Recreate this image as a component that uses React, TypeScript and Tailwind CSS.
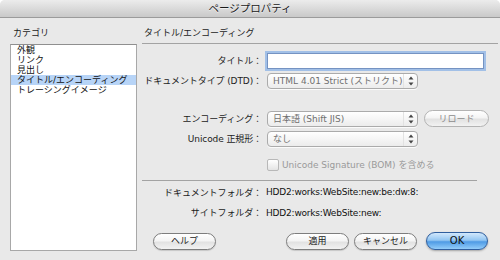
import React from "react";

const font = "font-['DejaVu_Sans','Noto_Sans_CJK_JP',sans-serif]";

// Small up/down stepper arrows of the popup menu.
function Stepper() {
  return (
    <div className="flex h-full w-[14px] items-center justify-center border-l border-[#e2e2e2]">
      <svg width="6" height="10" viewBox="0 0 6 10">
        <path d="M3 0.5 L5.5 3.5 L0.5 3.5 Z" fill="#444" />
        <path d="M3 9.5 L5.5 6.5 L0.5 6.5 Z" fill="#444" />
      </svg>
    </div>
  );
}

function Select({ value }: { value: string }) {
  return (
    <div className="flex h-[16px] w-[151px] items-center rounded-[4px] border border-[#ababab] bg-gradient-to-b from-white to-[#ececec] shadow-[0_1px_0_rgba(255,255,255,0.8)]">
      <span className="flex-1 truncate pl-[5px] leading-[14px] text-[#6f6f6f]">
        {value}
      </span>
      <Stepper />
    </div>
  );
}

function Pill({
  label,
  className = "",
  disabled = false,
}: {
  label: string;
  className?: string;
  disabled?: boolean;
}) {
  return (
    <div
      className={`flex h-[17px] items-center justify-center rounded-full border bg-[linear-gradient(to_bottom,#ffffff_0%,#f4f4f4_45%,#e2e2e2_55%,#f2f2f2_100%)] leading-[14px] ${
        disabled
          ? "border-[#b3b3b3] text-[#8c8c8c]"
          : "border-[#7d7d7d] text-[#1c1c1c] shadow-[0_1px_1px_rgba(0,0,0,0.15)]"
      } ${className}`}
    >
      {label}
    </div>
  );
}

function Row({
  label,
  children,
  className = "",
}: {
  label: string;
  children: React.ReactNode;
  className?: string;
}) {
  return (
    <div className={`flex items-center ${className}`}>
      <span className="w-[120px] text-right leading-[12px] tracking-[-0.1px] text-[#1c1c1c]">
        {label}
      </span>
      <div className="ml-[5px]">{children}</div>
    </div>
  );
}

export default function App() {
  const items = ["外観", "リンク", "見出し", "タイトル/エンコーディング", "トレーシングイメージ"];

  return (
    <div className={`h-[260px] w-[500px] overflow-hidden bg-white text-[9px] ${font}`}>
      <div className="flex h-full flex-col overflow-hidden rounded-t-[5px] bg-[#e9e9e9]">
        {/* タイトルバー */}
        <div className="flex h-[18px] shrink-0 items-center justify-center border-b border-[#9b9b9b] bg-gradient-to-b from-[#ececec] to-[#c9c9c9] text-[10.5px] text-[#1a1a1a] [text-shadow:0_1px_0_rgba(255,255,255,0.6)]">
          ページプロパティ
        </div>

        <div className="flex flex-1 pl-[10px] pt-[9px]">
          {/* カテゴリ */}
          <div className="flex w-[127px] flex-col">
            <div className="h-[17px] pl-[3px] leading-[12px] text-[#1c1c1c]">カテゴリ</div>
            <div className="h-[207px] border border-[#a8a8a8] border-t-[#8f8f8f] bg-white">
              {items.map((item, i) => (
                <div
                  key={item}
                  className={`pl-[6px] leading-[10px] text-[#111] ${
                    i === 3 ? "bg-[#b7d4f7]" : ""
                  }`}
                >
                  {item}
                </div>
              ))}
            </div>
          </div>

          {/* タイトル/エンコーディング */}
          <div className="ml-[5px] flex flex-1 flex-col pr-[2px]">
            <div className="h-[17px] border-b border-[#a3a3a3] pl-[2px] leading-[12px] text-[#1c1c1c]">
              タイトル/エンコーディング
            </div>

            <Row label="タイトル：" className="mt-[9px]">
              <div className="h-[16px] w-[217px] border border-[#7593c2] bg-white shadow-[0_0_0_2px_rgba(138,178,230,0.75)]" />
            </Row>

            <Row label="ドキュメントタイプ (DTD)：" className="mt-[4px]">
              <Select value="HTML 4.01 Strict (ストリクト)" />
            </Row>

            <Row label="エンコーディング：" className="mt-[21px]">
              <div className="flex items-center">
                <Select value="日本語 (Shift JIS)" />
                <Pill label="リロード" disabled className="ml-[6px] w-[65px]" />
              </div>
            </Row>

            <Row label="Unicode 正規形：" className="mt-[4px]">
              <Select value="なし" />
            </Row>

            <div className="mt-[12px] flex h-[12px] items-center pl-[125px]">
              <div className="h-[12px] w-[12px] rounded-[2px] border border-[#b8b8b8] bg-gradient-to-b from-white to-[#e4e4e4]" />
              <span className="ml-[3px] leading-[12px] text-[#9a9a9a]">
                Unicode Signature (BOM) を含める
              </span>
            </div>

            <div className="mt-[9px] h-px w-[335px] bg-[#a3a3a3]" />

            <Row label="ドキュメントフォルダ：" className="mt-[5px]">
              <span className="-ml-[1px] leading-[12px] tracking-[-0.2px] text-[#111]">
                HDD2:works:WebSite:new:be:dw:8:
              </span>
            </Row>

            <Row label="サイトフォルダ：" className="mt-[7px]">
              <span className="-ml-[1px] leading-[12px] tracking-[-0.2px] text-[#111]">
                HDD2:works:WebSite:new:
              </span>
            </Row>

            <div className="mt-[12px] flex items-center pl-[11px] pr-[10px]">
              <Pill label="ヘルプ" className="w-[63px]" />
              <div className="flex-1" />
              <Pill label="適用" className="w-[63px]" />
              <Pill label="キャンセル" className="ml-[5px] w-[63px]" />
              <div className="ml-[9px] flex h-[18px] w-[62px] items-center justify-center rounded-full border border-[#2f5e9e] bg-[linear-gradient(to_bottom,#d2e8fc_0%,#93c6f2_45%,#4f9be5_55%,#93cdfa_100%)] text-[10px] leading-[14px] text-[#111] shadow-[0_1px_2px_rgba(0,0,0,0.3)]">
                OK
              </div>
            </div>
          </div>
        </div>
      </div>
    </div>
  );
}
